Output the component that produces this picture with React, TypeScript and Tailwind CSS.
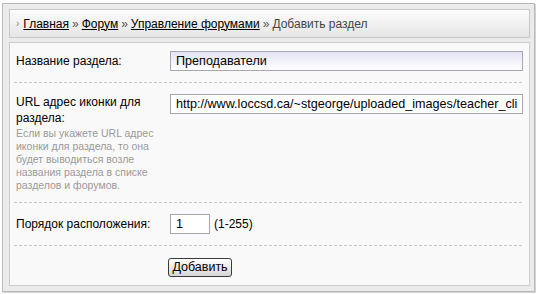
import React from "react";

const Sep = () => (
  <div className="ml-[4px] mr-[5px] h-px bg-[linear-gradient(to_right,#c6c6c6_3px,transparent_3px)] bg-[length:5px_1px]" />
);

const crumbs = ["Главная", "Форум", "Управление форумами"];

export default function App() {
  return (
    <div className="min-h-screen bg-white font-['Liberation_Sans',Arial,sans-serif] text-[12px] text-black">
      <div className="ml-[2px] mt-[3px] w-[533px] border border-[#b9b9b9] bg-[#ebebeb] pb-[5px] pl-[6px] pr-[4px] pt-[5px] shadow-[1px_1px_0_#d4d4d4]">
        <div className="flex h-[29px] items-center border border-[#c8c8c8] bg-gradient-to-b from-[#fcfcfc] to-[#e5e5e5] pl-[6px]">
          <span className="mr-[4px] text-[10px] text-[#888]">›</span>
          {crumbs.map((c, i) => (
            <React.Fragment key={i}>
              <a href="#" className="text-black underline">
                {c}
              </a>
              <span className="mx-[3px] text-[#555]">»</span>
            </React.Fragment>
          ))}
          <span className="text-[#444]">Добавить раздел</span>
        </div>

        <div className="mt-[4px] border border-[#cdcdcd] bg-[#f9f9f9]">
          <div className="flex items-center pb-[11px] pl-[6px] pt-[8px]">
            <div className="w-[154px]">Название раздела:</div>
            <input
              defaultValue="Преподаватели"
              className="h-[20px] w-[353px] border border-[#a7a7b0] bg-gradient-to-b from-[#e3e3f5] to-white px-[5px] text-[12.6px] outline-none"
            />
          </div>
          <Sep />
          <div className="flex items-start pb-[10px] pl-[6px] pt-[11px]">
            <div className="w-[154px]">
              <div className="leading-[16px]">
                URL адрес иконки для
                <br />
                раздела:
              </div>
              <div className="mt-[1px] text-[10.5px] leading-[13px] text-[#9a9a9a]">
                Если вы укажете URL адрес
                <br />
                иконки для раздела, то она
                <br />
                будет выводиться возле
                <br />
                названия раздела в списке
                <br />
                разделов и форумов.
              </div>
            </div>
            <input
              defaultValue="http://www.loccsd.ca/~stgeorge/uploaded_images/teacher_clipart.gif"
              className="h-[20px] w-[353px] border border-[#a7a7b0] bg-white px-[5px] text-[12.6px] outline-none"
            />
          </div>
          <Sep />
          <div className="flex items-center pb-[11px] pl-[6px] pt-[11px]">
            <div className="w-[154px]">Порядок расположения:</div>
            <input
              defaultValue="1"
              className="h-[20px] w-[40px] border border-[#a7a7b0] bg-white px-[5px] text-[12.6px] outline-none"
            />
            <span className="ml-[4px]">(1-255)</span>
          </div>
          <Sep />
          <div className="pb-[8px] pl-[158px] pt-[12px]">
            <button className="flex h-[19px] w-[64px] items-center justify-center rounded-[3px] border border-[#3a3a3a] bg-gradient-to-b from-white to-[#d6d6d6] text-[12.5px] leading-none">
              Добавить
            </button>
          </div>
        </div>
      </div>
    </div>
  );
}
